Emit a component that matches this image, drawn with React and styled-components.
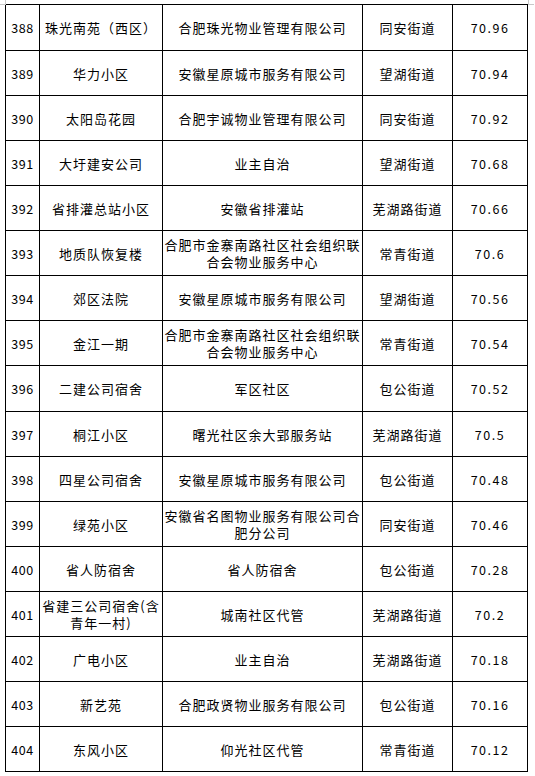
import React from 'react'
import styled, { createGlobalStyle } from 'styled-components'

const rows = [
  ['388', '珠光南苑（西区）', '合肥珠光物业管理有限公司', '同安街道', '70.96'],
  ['389', '华力小区', '安徽星原城市服务有限公司', '望湖街道', '70.94'],
  ['390', '太阳岛花园', '合肥宇诚物业管理有限公司', '同安街道', '70.92'],
  ['391', '大圩建安公司', '业主自治', '望湖街道', '70.68'],
  ['392', '省排灌总站小区', '安徽省排灌站', '芜湖路街道', '70.66'],
  ['393', '地质队恢复楼', '合肥市金寨南路社区社会组织联合会物业服务中心', '常青街道', '70.6'],
  ['394', '郊区法院', '安徽星原城市服务有限公司', '望湖街道', '70.56'],
  ['395', '金江一期', '合肥市金寨南路社区社会组织联合会物业服务中心', '常青街道', '70.54'],
  ['396', '二建公司宿舍', '军区社区', '包公街道', '70.52'],
  ['397', '桐江小区', '曙光社区余大郢服务站', '芜湖路街道', '70.5'],
  ['398', '四星公司宿舍', '安徽星原城市服务有限公司', '包公街道', '70.48'],
  ['399', '绿苑小区', '安徽省名图物业服务有限公司合肥分公司', '同安街道', '70.46'],
  ['400', '省人防宿舍', '省人防宿舍', '包公街道', '70.28'],
  ['401', '省建三公司宿舍(含青年一村)', '城南社区代管', '芜湖路街道', '70.2'],
  ['402', '广电小区', '业主自治', '芜湖路街道', '70.18'],
  ['403', '新艺苑', '合肥政贤物业服务有限公司', '包公街道', '70.16'],
  ['404', '东风小区', '仰光社区代管', '常青街道', '70.12']
]

const GlobalStyle = createGlobalStyle`
  body {
    margin: 0;
    background: #fff;
    color: #000;
    font-family: "Noto Sans CJK SC", "Noto Sans", sans-serif;
  }
`

const Page = styled.div`
  position: relative;
  padding: 4px 0 0 5px;
`

const CropMark = styled.span`
  position: absolute;
  top: 0;
  width: 5px;
  height: 4px;
  border-bottom: 1px solid #c8c8c8;
  ${p => (p.right ? 'left: 528px; border-left: 1px solid #c8c8c8;' : 'left: 0; border-right: 1px solid #c8c8c8;')}
`

const Table = styled.table`
  border-collapse: collapse;
  table-layout: fixed;
  width: 523px;
  font-size: 13px;
  letter-spacing: 1px;
`

const Row = styled.tr`
  height: ${p => (p.tall ? 46 : 45)}px;
`

const Cell = styled.td`
  border: 1px solid #000;
  padding: 0 1px;
  text-align: center;
  vertical-align: middle;
  line-height: 17px;
  font-weight: 400;
  word-break: break-all;
`

const NumCell = styled(Cell)`
  font-size: 12.5px;
  letter-spacing: ${p => (p.wide ? '1.5px' : '0.5px')};
`

export default function App() {
  return (
    <Page>
      <GlobalStyle />
      <CropMark />
      <CropMark right />
      <Table>
        <colgroup>
          <col style={{ width: 34 }} />
          <col style={{ width: 123 }} />
          <col style={{ width: 200 }} />
          <col style={{ width: 90 }} />
          <col style={{ width: 75 }} />
        </colgroup>
        <tbody>
          {rows.map(([no, name, company, street, score], i) => (
            <Row key={no} tall={i === 0 || i === 8}>
              <NumCell>{no}</NumCell>
              <Cell>{name}</Cell>
              <Cell>{company}</Cell>
              <Cell>{street}</Cell>
              <NumCell wide>{score}</NumCell>
            </Row>
          ))}
        </tbody>
      </Table>
    </Page>
  )
}
